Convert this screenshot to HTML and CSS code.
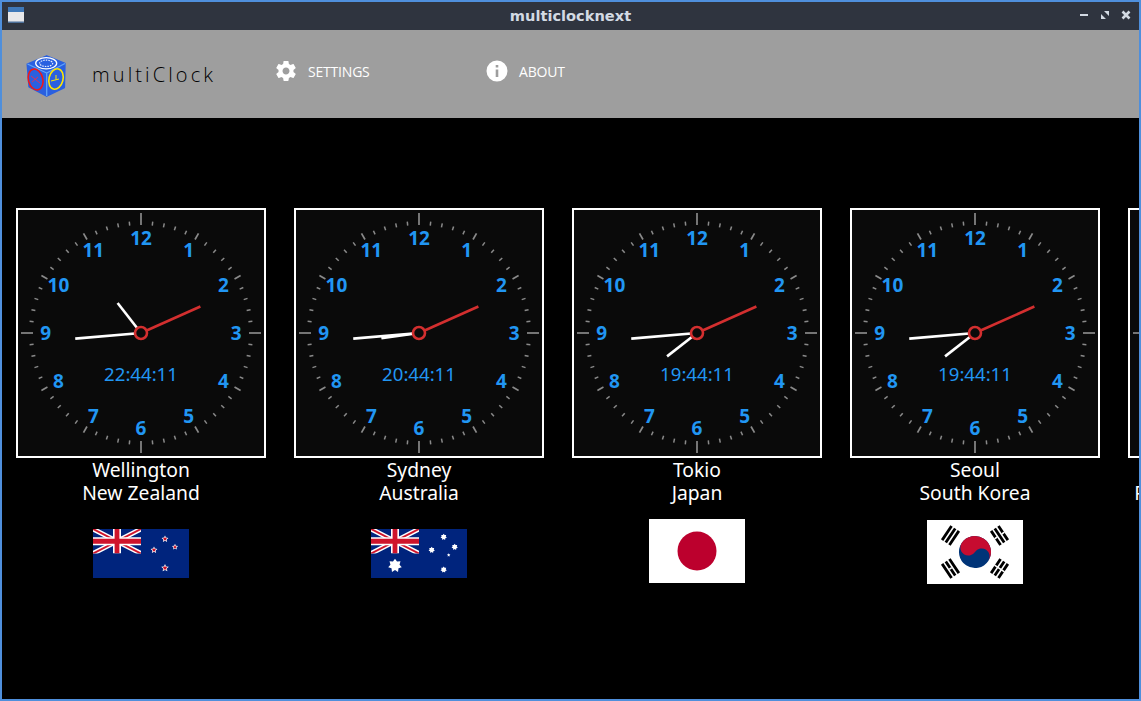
FILE: index.html
```html
<!DOCTYPE html>
<html lang="en">
<head>
<meta charset="UTF-8">
<meta name="viewport" content="width=device-width, initial-scale=1.0">
<title>multiclocknext</title>
<link rel="stylesheet" href="styles.css">
</head>
<body>

<svg class="defs">
    <defs>
        <clipPath id="jack-clip"><rect width="48" height="24.5"/></clipPath>
        <g id="union-jack" clip-path="url(#jack-clip)">
            <rect width="48" height="24.5" fill="#00247d"/>
            <path d="M0 0L48 24.5M48 0L0 24.5" stroke="#fff" stroke-width="4.8"/>
            <path d="M0 0L48 24.5M48 0L0 24.5" stroke="#cf142b" stroke-width="2"/>
            <path d="M24 0V24.5M0 12.25H48" stroke="#fff" stroke-width="8"/>
            <path d="M24 0V24.5M0 12.25H48" stroke="#cf142b" stroke-width="4.8"/>
        </g>
        <path id="star5" d="M0 -1L.29 -.4L.95 -.31L.47 .15L.59 .81L0 .5L-.59 .81L-.47 .15L-.95 -.31L-.29 -.4Z"/>
        <path id="star7" d="M0 -1L.29 -.6L.78 -.62L.65 -.15L.97 .22L.5 .37L.43 .9L0 .62L-.43 .9L-.5 .37L-.97 .22L-.65 -.15L-.78 -.62L-.29 -.6Z"/>
        <path id="trigram" d="M-8.5 -4.4H8.5M-8.5 0H8.5M-8.5 4.4H8.5" stroke="#000" stroke-width="2.8"/>
    </defs>
</svg>

<div class="window">
    <div class="titlebar">
        <svg class="win-icon" viewBox="0 0 16 16">
            <rect width="16" height="16" rx="1" fill="#e8e8ea"/>
            <rect width="16" height="5" fill="#3f78b8"/>
            <rect y="14.5" width="16" height="1.5" fill="#4c6f99"/>
        </svg>
        <span class="win-title">multiclocknext</span>
        <div class="win-buttons">
            <svg viewBox="0 0 10 10"><path d="M1 5H9" stroke="#d3dae3" stroke-width="2"/></svg>
            <svg viewBox="0 0 10 10"><path d="M4 1H9V6ZM1 4V9H6Z" fill="#d3dae3"/></svg>
            <svg viewBox="0 0 10 10"><path d="M1.5 1.5L8.5 8.5M8.5 1.5L1.5 8.5" stroke="#d3dae3" stroke-width="2.6"/></svg>
        </div>
    </div>

    <div class="toolbar">
        <svg class="logo" viewBox="0 0 40 42">
            <path d="M20.7 0.8L39 8.4L38.4 32.6L20.7 41.2L3 31.8L1.2 9.2Z" fill="#2a60e0" stroke="#2a60e0" stroke-width="1.4" stroke-linejoin="round"/>
            <path d="M20.7 18L1.5 9M20.7 18L39 8.5M20.7 18V41" stroke="#62a4f8" stroke-width="1.3"/>
            <ellipse cx="20.2" cy="8.3" rx="10.5" ry="5.6" fill="none" stroke="#fff" stroke-width="1.3"/>
            <ellipse cx="20.2" cy="8.3" rx="6.5" ry="3.2" fill="none" stroke="#e8eeff" stroke-width="1.2" stroke-dasharray="1.5 1"/>
            <ellipse cx="9.6" cy="24.5" rx="7.2" ry="10.6" transform="rotate(-14 9.6 24.5)" fill="none" stroke="#f01818" stroke-width="1.6"/>
            <path d="M5 21L14 28M6 27L12 22" stroke="#d83060" stroke-width="1"/>
            <ellipse cx="30" cy="24" rx="7" ry="10.4" transform="rotate(14 30 24)" fill="none" stroke="#ffe600" stroke-width="1.6"/>
            <path d="M25 26L33 24M30 24.5V20" stroke="#ffe600" stroke-width="1"/>
        </svg>
        <span class="app-name">multiClock</span>
        <a class="nav-item nav-settings">
            <svg class="nav-icon" viewBox="0 0 24 24"><path fill="#fff" d="M19.43 12.98c.04-.32.07-.64.07-.98s-.03-.66-.07-.98l2.11-1.65c.19-.15.24-.42.12-.64l-2-3.46c-.12-.22-.39-.3-.61-.22l-2.49 1c-.52-.4-1.08-.73-1.69-.98l-.38-2.65C14.46 2.18 14.25 2 14 2h-4c-.25 0-.46.18-.49.42l-.38 2.65c-.61.25-1.17.59-1.69.98l-2.49-1c-.23-.09-.49 0-.61.22l-2 3.46c-.13.22-.07.49.12.64l2.11 1.65c-.04.32-.07.65-.07.98s.03.66.07.98l-2.11 1.65c-.19.15-.24.42-.12.64l2 3.46c.12.22.39.3.61.22l2.49-1c.52.4 1.08.73 1.69.98l.38 2.65c.03.24.24.42.49.42h4c.25 0 .46-.18.49-.42l.38-2.65c.61-.25 1.17-.59 1.69-.98l2.49 1c.23.09.49 0 .61-.22l2-3.46c.12-.22.07-.49-.12-.64l-2.11-1.65zM12 15.5c-1.93 0-3.5-1.57-3.5-3.5s1.57-3.5 3.5-3.5 3.5 1.57 3.5 3.5-1.57 3.5-3.5 3.5z"/></svg>
            <span>SETTINGS</span>
        </a>
        <a class="nav-item">
            <svg class="nav-icon" viewBox="0 0 24 24"><path fill="#fff" fill-rule="evenodd" d="M12 1.5a10.5 10.5 0 1 0 0 21 10.5 10.5 0 0 0 0-21zM10.7 6h2.6v2.6h-2.6zM10.7 10.5h2.6V18h-2.6z"/></svg>
            <span>ABOUT</span>
        </a>
    </div>

    <div class="clocks">
        <div class="clock-item">
            <div class="clock-face" data-time="22:44:11"></div>
            <div class="clock-label">Wellington<br>New Zealand</div>
            <div class="flag-slot">
                <svg class="flag flag-wide" viewBox="0 0 96 49">
                    <rect width="96" height="49" fill="#00247d"/>
                    <use href="#union-jack"/>
                    <g fill="#fff">
                        <use href="#star5" transform="translate(72 10) scale(3.6)"/>
                        <use href="#star5" transform="translate(61 21) scale(3.6)"/>
                        <use href="#star5" transform="translate(82 18) scale(3.2)"/>
                        <use href="#star5" transform="translate(72 39) scale(4)"/>
                    </g>
                    <g fill="#cc142b">
                        <use href="#star5" transform="translate(72 10) scale(2.2)"/>
                        <use href="#star5" transform="translate(61 21) scale(2.2)"/>
                        <use href="#star5" transform="translate(82 18) scale(1.9)"/>
                        <use href="#star5" transform="translate(72 39) scale(2.5)"/>
                    </g>
                </svg>
            </div>
        </div>
        <div class="clock-item">
            <div class="clock-face" data-time="20:44:11"></div>
            <div class="clock-label">Sydney<br>Australia</div>
            <div class="flag-slot">
                <svg class="flag flag-wide" viewBox="0 0 96 49">
                    <rect width="96" height="49" fill="#00247d"/>
                    <use href="#union-jack"/>
                    <g fill="#fff">
                        <use href="#star7" transform="translate(24 36.7) scale(7)"/>
                        <use href="#star7" transform="translate(72.7 8) scale(3.2)"/>
                        <use href="#star7" transform="translate(60.7 21) scale(3.2)"/>
                        <use href="#star7" transform="translate(83.7 18) scale(3.2)"/>
                        <use href="#star5" transform="translate(77.7 26) scale(1.8)"/>
                        <use href="#star7" transform="translate(72.7 40.7) scale(3.2)"/>
                    </g>
                </svg>
            </div>
        </div>
        <div class="clock-item">
            <div class="clock-face" data-time="19:44:11"></div>
            <div class="clock-label">Tokio<br>Japan</div>
            <div class="flag-slot">
                <svg class="flag flag-tall" viewBox="0 0 96 64">
                    <rect width="96" height="64" fill="#fff"/>
                    <circle cx="48" cy="32" r="19.5" fill="#bc002d"/>
                </svg>
            </div>
        </div>
        <div class="clock-item">
            <div class="clock-face" data-time="19:44:11"></div>
            <div class="clock-label">Seoul<br>South Korea</div>
            <div class="flag-slot">
                <svg class="flag flag-tall flag-korea" viewBox="0 0 96 64">
                    <rect width="96" height="64" fill="#fff"/>
                    <g transform="translate(48 32) rotate(33.7)">
                        <circle r="16" fill="#003478"/>
                        <path d="M-16 0A16 16 0 0 1 16 0A8 8 0 0 0 0 0A8 8 0 0 1 -16 0Z" fill="#c60c30"/>
                    </g>
                    <use href="#trigram" transform="translate(23.5 15.5) rotate(-56.3)"/>
                    <g transform="translate(72.5 15.5) rotate(56.3)">
                        <use href="#trigram"/>
                        <path d="M0 -6V-2.7M0 2.7V6" stroke="#fff" stroke-width="1.6"/>
                    </g>
                    <g transform="translate(23.5 48.5) rotate(56.3)">
                        <use href="#trigram"/>
                        <path d="M0 -1.5V1.5" stroke="#fff" stroke-width="1.6"/>
                    </g>
                    <g transform="translate(72.5 48.5) rotate(-56.3)">
                        <use href="#trigram"/>
                        <path d="M0 -6V6" stroke="#fff" stroke-width="1.6"/>
                    </g>
                </svg>
            </div>
        </div>
        <div class="clock-item">
            <div class="clock-face" data-time="18:44:11"></div>
            <div class="clock-label">Beijing<br>People's Republic of China</div>
        </div>
    </div>
</div>

<script src="clock.js"></script>
</body>
</html>
```

FILE: styles.css
```css
html, body {
    margin: 0;
    padding: 0;
    height: 100%;
    overflow: hidden;
}
.defs {
    position: absolute;
    width: 0;
    height: 0;
}
.window {
    box-sizing: border-box;
    height: 100vh;
    border: 2px solid #4f8fdc;
    background-color: #000000;
    display: flex;
    flex-direction: column;
    overflow: hidden;
}
.titlebar {
    box-sizing: border-box;
    flex: none;
    height: 28px;
    background-color: #2f343f;
    display: flex;
    align-items: center;
    justify-content: space-between;
    padding: 0 8px 2px 6px;
    position: relative;
}
.win-icon {
    width: 16px;
    height: 16px;
}
.win-title {
    position: absolute;
    left: 0;
    right: 0;
    text-align: center;
    color: #d3dae3;
    font-family: "DejaVu Sans", sans-serif;
    font-weight: bold;
    font-size: 14.6px;
}
.win-buttons {
    display: flex;
    gap: 11px;
    margin-left: auto;
}
.win-buttons svg {
    width: 10px;
    height: 10px;
}
.toolbar {
    flex: none;
    height: 88px;
    background-color: #9e9e9e;
    display: flex;
    align-items: center;
}
.logo {
    width: 40px;
    height: 42px;
    margin-left: 24px;
    margin-top: 3px;
}
.app-name {
    margin-left: 26px;
    width: 181.5px;
    color: #000000;
    font-family: "Open Sans", sans-serif;
    font-weight: 300;
    font-size: 20px;
    letter-spacing: 3.1px;
}
.nav-item {
    display: flex;
    align-items: center;
    gap: 10.5px;
    color: #ffffff;
    font-family: "Open Sans", sans-serif;
    font-size: 14px;
    letter-spacing: -0.2px;
    margin-top: -6px;
}
.nav-settings {
    width: 211px;
}
.nav-icon {
    width: 24px;
    height: 24px;
}
.clocks {
    display: flex;
    gap: 28px;
    padding: 90px 0 0 14px;
}
.clock-item {
    flex: none;
    width: 250px;
    display: flex;
    flex-direction: column;
    align-items: center;
}
.clock-face {
    box-sizing: border-box;
    width: 250px;
    height: 250px;
    border: 2px solid #ffffff;
    background-color: #0a0a0a;
}
.clock-face svg {
    display: block;
}
.clock-label {
    width: 250px;
    color: #ffffff;
    font-family: "Noto Sans", sans-serif;
    font-size: 19.3px;
    line-height: 23px;
    text-align: center;
    white-space: nowrap;
    display: flex;
    flex-direction: column;
    align-items: center;
}
.flag-slot {
    height: 66px;
    margin-top: 15px;
}
.flag {
    display: block;
    width: 96px;
}
.flag-wide {
    height: 49px;
    margin-top: 10px;
}
.flag-tall {
    height: 64px;
}
.flag-korea {
    margin-top: 1px;
}
.tick {
    stroke: #8a8a8a;
}
.clock-num {
    fill: #2196f3;
    font-family: "Noto Sans", sans-serif;
    font-weight: bold;
    font-size: 19px;
    text-anchor: middle;
    dominant-baseline: central;
}
.clock-time {
    fill: #2196f3;
    font-family: "Noto Sans", sans-serif;
    font-size: 18.6px;
    text-anchor: middle;
    dominant-baseline: central;
}
.hand {
    stroke: #ffffff;
    stroke-width: 2.6;
}
.hand-second {
    stroke: #d32f2f;
}
.hub {
    fill: #0a0a0a;
    stroke: #d32f2f;
    stroke-width: 2.6;
}
```

FILE: clock.js
```js
var SIZE = 246;
var C = SIZE / 2;
var NS = "http://www.w3.org/2000/svg";

function el(parent, name, attrs) {
    var e = document.createElementNS(NS, name);
    for (var k in attrs) {
        e.setAttribute(k, attrs[k]);
    }
    parent.appendChild(e);
    return e;
}

function polar(r, deg) {
    var a = deg * Math.PI / 180;
    return { x: C + r * Math.sin(a), y: C - r * Math.cos(a) };
}

function line(svg, cls, r1, r2, deg, width) {
    var a = polar(r1, deg), b = polar(r2, deg);
    var attrs = { "class": cls, x1: a.x, y1: a.y, x2: b.x, y2: b.y };
    if (width) attrs["stroke-width"] = width;
    return el(svg, "line", attrs);
}

function drawClock(face) {
    var svg = el(face, "svg", { width: SIZE, height: SIZE, viewBox: "0 0 246 246" });
    var i;

    for (i = 0; i < 60; i++) {
        var outer = 112;
        if (i % 15 == 0) outer = 120;
        else if (i % 5 == 0) outer = 115;
        line(svg, "tick", 108, outer, i * 6, i % 5 == 0 ? 1.7 : 1.5);
    }

    for (i = 1; i <= 12; i++) {
        var p = polar(95.3, i * 30);
        var n = el(svg, "text", { "class": "clock-num", x: p.x, y: p.y });
        n.textContent = i;
    }

    var t = el(svg, "text", { "class": "clock-time", x: C, y: C + 40 });
    t.textContent = face.dataset.time;

    var parts = face.dataset.time.split(":");
    var h = +parts[0], m = +parts[1], s = +parts[2];
    line(svg, "hand", 0, 38, (h % 12 + m / 60) * 30);
    line(svg, "hand", 0, 66, (m + s / 60) * 6);
    line(svg, "hand hand-second", 0, 65, s * 6);
    el(svg, "circle", { "class": "hub", cx: C, cy: C, r: 6 });
}

var faces = document.querySelectorAll(".clock-face");
for (var f = 0; f < faces.length; f++) {
    drawClock(faces[f]);
}
```
